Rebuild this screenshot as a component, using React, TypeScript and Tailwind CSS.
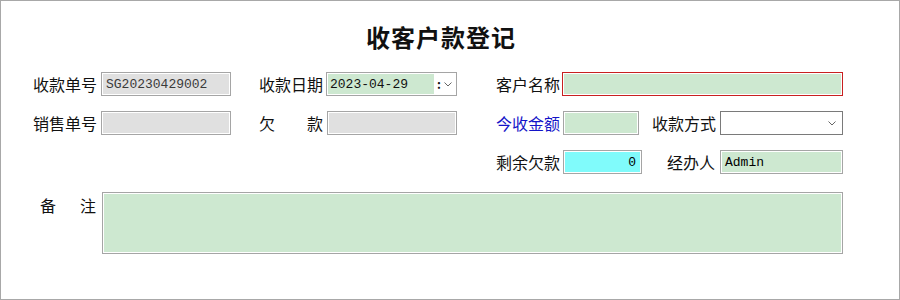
const cjk = "font-['Noto_Sans_CJK_SC',sans-serif]";
const mono = "font-['Liberation_Mono','Noto_Sans_CJK_SC',monospace]";

const Chevron = () => (
  <svg width="8" height="5" viewBox="0 0 8 5" className="block">
    <path d="M0.5 0.5 L4 4 L7.5 0.5" fill="none" stroke="#666" strokeWidth="1" />
  </svg>
);

const Box = ({ w, bg, border = "border-[#a5a5a5]", children, right = false }: {
  w: string; bg: string; border?: string; children?: React.ReactNode; right?: boolean
}) => (
  <div className={`${w} h-[24px] border ${border} ${bg} shadow-[inset_0_0_0_1px_#ffffff] flex items-center ${right ? "justify-end pr-[5px]" : "pl-[4px]"} text-[13px] ${mono} leading-none text-black`}>
    {children}
  </div>
);

export default function App() {
  return (
    <div className={`w-[900px] h-[300px] bg-white border border-[#a8a8a8] ${cjk} text-[16px] text-[#111] leading-none`}>
      <div className="mt-[21px] h-[30px] flex justify-center pr-[18px]">
        <h1 className="text-[24px] font-bold leading-[30px] tracking-[1px]">收客户款登记</h1>
      </div>

      {/* row 1 */}
      <div className="mt-[20px] flex items-center pl-[32px]">
        <span className="w-[68px]">收款单号</span>
        <Box w="w-[130px]" bg="bg-[#e0e0e0]"><span className="text-[#3a3a3a]">SG20230429002</span></Box>
        <span className="ml-[28px] w-[67px]">收款日期</span>
        <div className="w-[131px] h-[24px] border border-[#a5a5a5] flex">
          <div className={`w-[108px] h-full bg-[#cde8d0] shadow-[inset_0_0_0_1px_#ffffff] flex items-center pl-[3px] text-[13px] ${mono}`}>2023-04-29</div>
          <div className="flex-1 flex items-center bg-white">
            <span className="text-[12px] font-bold ml-[2px] mr-[3px]">:</span>
            <Chevron />
          </div>
        </div>
        <span className="ml-[39px] w-[66px]">客户名称</span>
        <Box w="w-[281px]" bg="bg-[#cde8d0]" border="border-[#c82020]" />
      </div>

      {/* row 2 */}
      <div className="mt-[15px] flex items-center pl-[32px]">
        <span className="w-[68px]">销售单号</span>
        <Box w="w-[130px]" bg="bg-[#e0e0e0]" />
        <span className="ml-[28px] w-[68px] flex justify-between pr-[4px]"><span>欠</span><span>款</span></span>
        <Box w="w-[130px]" bg="bg-[#e0e0e0]" />
        <span className="ml-[39px] w-[67px] text-[#1414c8]">今收金额</span>
        <Box w="w-[76px]" bg="bg-[#cde8d0]" />
        <span className="ml-[13px] w-[68px]">收款方式</span>
        <div className="w-[123px] h-[24px] border border-[#7a7a7a] bg-white flex items-center justify-end pr-[6px]">
          <Chevron />
        </div>
      </div>

      {/* row 3 */}
      <div className="mt-[15px] flex items-center pl-[495px]">
        <span className="w-[67px]">剩余欠款</span>
        <Box w="w-[79px]" bg="bg-[#80fbfb]" right>0</Box>
        <span className="ml-[25px] w-[53px]">经办人</span>
        <Box w="w-[123px]" bg="bg-[#cde8d0]">Admin</Box>
      </div>

      {/* row 4 */}
      <div className="mt-[18px] flex items-start pl-[39px]">
        <span className="w-[62px] flex justify-between pr-[6px] pt-[5px]"><span>备</span><span>注</span></span>
        <div className="w-[741px] h-[62px] border border-[#a5a5a5] bg-[#cde8d0] shadow-[inset_0_0_0_1px_#ffffff]" />
      </div>
    </div>
  );
}
